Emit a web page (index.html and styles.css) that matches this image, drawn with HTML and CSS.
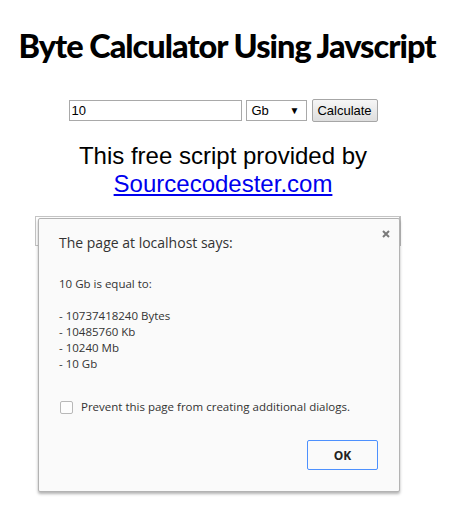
FILE: index.html
```html
<!DOCTYPE html>
<html>
<head>
<meta charset="utf-8">
<title>Byte Calculator Using Javscript</title>
<link rel="stylesheet" href="styles.css">
</head>
<body>
<div class="page">
  <h1 class="title">Byte Calculator Using Javscript</h1>
  <div class="calc">
    <input class="amount" type="text" value="10">
    <div class="unit"><span>Gb</span><span class="arrow">&#9660;</span></div>
    <button class="calc-btn" type="button">Calculate</button>
  </div>
  <p class="credit">This free script provided by<br><a href="#">Sourcecodester.com</a></p>
  <div class="result"></div>
</div>

<div class="dialog">
  <svg class="close" width="8" height="8" viewBox="0 0 8 8"><path d="M1 1L7 7M7 1L1 7" stroke="#7a7a7a" stroke-width="2" fill="none"/></svg>
  <div class="dialog-title">The page at localhost says:</div>
  <div class="dialog-msg">10 Gb is equal to:<br><br>- 10737418240 Bytes<br>- 10485760 Kb<br>- 10240 Mb<br>- 10 Gb</div>
  <label class="prevent"><span class="check"></span><span>Prevent this page from creating additional dialogs.</span></label>
  <div class="dialog-actions"><button class="ok" type="button">OK</button></div>
</div>
</body>
</html>
```

FILE: styles.css
```css
html, body {
  margin: 0;
  padding: 0;
  background: #ffffff;
}

.page {
  width: 446px;
  display: flex;
  flex-direction: column;
  align-items: center;
}

.title {
  margin: 26px 0 0 8px;
  font-family: Lato, "Open Sans", sans-serif;
  font-weight: 900;
  font-size: 32.5px;
  line-height: 40px;
  letter-spacing: -1px;
  color: #000;
  white-space: nowrap;
}

.calc {
  margin-top: 32px;
  height: 24px;
  display: flex;
  align-items: center;
  font-family: "Liberation Sans", Arial, sans-serif;
  font-size: 13px;
}

.amount {
  box-sizing: border-box;
  width: 173px;
  height: 21px;
  margin: 0;
  padding: 1px 2px;
  border: 1px solid #a9a9a9;
  font-family: "Liberation Sans", Arial, sans-serif;
  font-size: 13px;
  color: #000;
  outline: none;
}

.unit {
  box-sizing: border-box;
  width: 61px;
  height: 21px;
  margin-left: 4px;
  padding: 0 6px 0 5px;
  border: 1px solid #a9a9a9;
  display: flex;
  align-items: center;
  justify-content: space-between;
  background: #fff;
  color: #000;
}

.unit .arrow {
  font-size: 10px;
  color: #000;
}

.calc-btn {
  box-sizing: border-box;
  width: 66px;
  height: 23px;
  margin-left: 5px;
  padding: 0;
  border: 1px solid #a6a6a6;
  border-radius: 2px;
  background: linear-gradient(#f6f6f6, #dedede);
  font-family: "Liberation Sans", Arial, sans-serif;
  font-size: 13px;
  color: #000;
}

.credit {
  margin: 20px 0 0 0;
  font-family: "Liberation Sans", Arial, sans-serif;
  font-size: 24px;
  line-height: 27.5px;
  text-align: center;
  color: #000;
}

.credit a {
  color: #0000ee;
  text-decoration: underline;
}

.result {
  box-sizing: border-box;
  width: 366px;
  height: 30px;
  margin-top: 19px;
  margin-left: -10px;
  border: 1px solid #c4c4c4;
  border-right: 2px solid #bdbdbd;
}

.dialog {
  position: absolute;
  left: 38px;
  top: 218px;
  box-sizing: border-box;
  width: 362px;
  height: 274px;
  border: 1px solid #b3b3b3;
  border-radius: 2px;
  background: #fafafa;
  box-shadow: 0 2px 3px rgba(0, 0, 0, 0.3);
  padding: 0 21px 0 20px;
  font-family: "Open Sans", "Noto Sans", sans-serif;
  color: #333;
}

.close {
  position: absolute;
  left: 343px;
  top: 11px;
}

.dialog-title {
  margin-top: 14px;
  font-size: 14px;
  line-height: 20px;
  color: #333;
}

.dialog-msg {
  margin-top: 23px;
  font-size: 11.5px;
  line-height: 16px;
  color: #333;
}

.prevent {
  margin-top: 27px;
  display: flex;
  align-items: center;
  gap: 8px;
  font-size: 11.5px;
  line-height: 16px;
  color: #333;
}

.check {
  box-sizing: border-box;
  width: 13px;
  height: 13px;
  margin-left: 1px;
  border: 1px solid #b8b8b8;
  border-radius: 2px;
  background: #fdfdfd;
}

.dialog-actions {
  margin-top: 25px;
  display: flex;
  justify-content: flex-end;
}

.ok {
  box-sizing: border-box;
  width: 71px;
  height: 30px;
  border: 1px solid #4d90fe;
  border-radius: 2px;
  background: #fafafa;
  font-family: "Open Sans", "Noto Sans", sans-serif;
  font-weight: 700;
  font-size: 12px;
  color: #222;
}
```
